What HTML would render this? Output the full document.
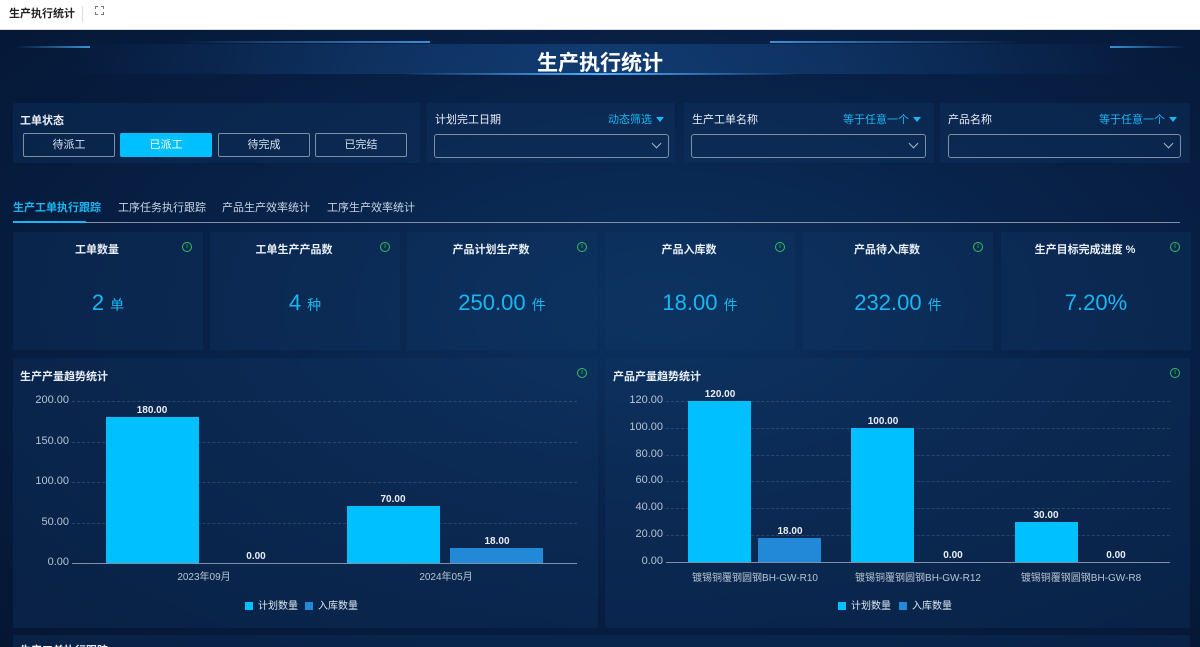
<!DOCTYPE html>
<html><head><meta charset="utf-8"><style>
*{margin:0;padding:0;box-sizing:border-box}
html,body{width:1200px;height:647px;overflow:hidden}
body{font-family:"Liberation Sans","Noto Sans CJK SC",sans-serif;background:#fff;position:relative}
.top{position:absolute;left:0;top:0;width:1200px;height:30px;background:#fff;border-bottom:1px solid #ddd}
.top span{position:absolute;left:9px;top:5px;font-size:11px;color:#222;font-weight:bold}
.main{position:absolute;left:0;top:30px;width:1200px;height:617px;background:radial-gradient(ellipse at 55% 45%,#0b3260 0%,#082249 45%,#051633 100%)}
.a{position:absolute}
.panel{position:absolute;background:rgba(18,55,100,0.35)}
.w{color:#e8eef6;font-size:11px;font-weight:bold}
.btn{position:absolute;top:133px;width:92px;height:24px;border:1px solid #7f8ea3;color:#d8e2ee;font-size:11px;text-align:center;line-height:22px;border-radius:2px}
.sel{position:absolute;top:134px;height:24px;border:1px solid #7f8ea3;border-radius:3px}
.sel i{position:absolute;right:8px;top:5px;width:7px;height:7px;border-right:1.5px solid #a8b8cc;border-bottom:1.5px solid #a8b8cc;transform:rotate(45deg)}
.blue{color:#19b6f2;font-size:11px}
.tri{display:inline-block;width:0;height:0;border-left:4px solid transparent;border-right:4px solid transparent;border-top:5px solid #19b6f2;margin-left:4px;vertical-align:1px}
.kt{position:absolute;top:241px;font-size:11px;font-weight:bold;color:#e8eef6;text-align:center;width:190px}
.kv{position:absolute;top:290px;font-size:22px;color:#19b6f2;text-align:center;width:190px}
.kv small{font-size:14px}
.info{position:absolute;width:10px;height:10px;border:1.2px solid #2fc35a;border-radius:50%;color:#2fc35a;font-size:7px;line-height:8px;text-align:center}
.yl{position:absolute;font-size:11px;color:#b8c4d2;text-align:right;width:50px}
.grid{position:absolute;height:0;border-top:1px dashed rgba(140,160,190,0.25)}
.bar{position:absolute;background:#00c0ff}
.bar2{position:absolute;background:#2189d8}
.vl{position:absolute;font-size:10px;color:#e8eef6;font-weight:bold;text-align:center;width:80px}
.xl{position:absolute;font-size:10px;color:#b8c4d2;text-align:center;width:200px}
.lg{position:absolute;font-size:10px;color:#dde6f0}
.lg b{display:inline-block;width:8px;height:8px;background:#00c0ff;margin-right:5px;vertical-align:-1px}
</style></head><body>
<div class="top"><span>生产执行统计</span><div class="a" style="left:82px;top:6px;width:1px;height:16px;background:#ddd"></div><div class="a" style="left:95px;top:6px;width:9px;height:9px;border:1px dashed #777"></div></div>
<div class="main"></div>
<div class="a" style="left:0;top:44px;width:1200px;height:30px;background:linear-gradient(90deg,transparent 5%,rgba(40,120,210,0.2) 30%,rgba(40,120,210,0.3) 50%,rgba(40,120,210,0.2) 70%,transparent 95%)"></div>
<div class="a" style="left:180px;top:41px;width:250px;height:2px;background:linear-gradient(90deg,transparent,#3a8fd8)"></div>
<div class="a" style="left:770px;top:41px;width:250px;height:2px;background:linear-gradient(90deg,#3a8fd8,transparent)"></div>
<div class="a" style="left:15px;top:46px;width:75px;height:2px;background:linear-gradient(90deg,transparent,#3a8fd8)"></div>
<div class="a" style="left:1110px;top:46px;width:75px;height:2px;background:linear-gradient(90deg,#3a8fd8,transparent)"></div>
<div class="a" style="left:400px;top:73px;width:400px;height:2px;background:linear-gradient(90deg,transparent,#4fb0ff,transparent)"></div>
<div class="a" style="left:0;top:47px;width:1200px;text-align:center;color:#fff;font-size:21px;font-weight:bold">生产执行统计</div>
<div class="panel" style="left:13px;top:103px;width:407px;height:60px"></div>
<div class="a w" style="left:20px;top:112px">工单状态</div>
<div class="btn" style="left:23px">待派工</div>
<div class="btn" style="left:120px;background:#00c0ff;border-color:#00c0ff;color:#fff">已派工</div>
<div class="btn" style="left:218px">待完成</div>
<div class="btn" style="left:315px">已完结</div>
<div class="panel" style="left:427px;top:103px;width:248px;height:60px"></div>
<div class="a w" style="left:435px;top:111px;font-weight:normal">计划完工日期</div>
<div class="a blue" style="left:608px;top:111px">动态筛选<span class="tri"></span></div>
<div class="sel" style="left:434px;width:235px"><i></i></div>
<div class="panel" style="left:684px;top:103px;width:250px;height:60px"></div>
<div class="a w" style="left:692px;top:111px;font-weight:normal">生产工单名称</div>
<div class="a blue" style="left:843px;top:111px">等于任意一个<span class="tri"></span></div>
<div class="sel" style="left:691px;width:235px"><i></i></div>
<div class="panel" style="left:940px;top:103px;width:250px;height:60px"></div>
<div class="a w" style="left:948px;top:111px;font-weight:normal">产品名称</div>
<div class="a blue" style="left:1099px;top:111px">等于任意一个<span class="tri"></span></div>
<div class="sel" style="left:948px;width:233px"><i></i></div>
<div class="a" style="left:13px;top:199px;font-size:11px;color:#19b6f2;font-weight:bold">生产工单执行跟踪</div>
<div class="a" style="left:118px;top:199px;font-size:11px;color:#c8d4e2">工序任务执行跟踪</div>
<div class="a" style="left:222px;top:199px;font-size:11px;color:#c8d4e2">产品生产效率统计</div>
<div class="a" style="left:327px;top:199px;font-size:11px;color:#c8d4e2">工序生产效率统计</div>
<div class="a" style="left:13px;top:222px;width:1167px;height:1px;background:#7f90a8"></div>
<div class="a" style="left:13px;top:221px;width:73px;height:2px;background:#19b6f2"></div>
<div class="panel" style="left:13px;top:232px;width:190px;height:118px"></div>
<div class="panel" style="left:210px;top:232px;width:190px;height:118px"></div>
<div class="panel" style="left:407px;top:232px;width:190px;height:118px"></div>
<div class="panel" style="left:605px;top:232px;width:190px;height:118px"></div>
<div class="panel" style="left:803px;top:232px;width:190px;height:118px"></div>
<div class="panel" style="left:1001px;top:232px;width:190px;height:118px"></div>
<div class="kt" style="left:2px">工单数量</div><div class="info" style="left:182px;top:242px">i</div>
<div class="kt" style="left:199px">工单生产产品数</div><div class="info" style="left:380px;top:242px">i</div>
<div class="kt" style="left:396px">产品计划生产数</div><div class="info" style="left:577px;top:242px">i</div>
<div class="kt" style="left:594px">产品入库数</div><div class="info" style="left:775px;top:242px">i</div>
<div class="kt" style="left:792px">产品待入库数</div><div class="info" style="left:973px;top:242px">i</div>
<div class="kt" style="left:990px">生产目标完成进度 %</div><div class="info" style="left:1170px;top:242px">i</div>
<div class="kv" style="left:13px">2 <small>单</small></div>
<div class="kv" style="left:210px">4 <small>种</small></div>
<div class="kv" style="left:407px">250.00 <small>件</small></div>
<div class="kv" style="left:605px">18.00 <small>件</small></div>
<div class="kv" style="left:803px">232.00 <small>件</small></div>
<div class="kv" style="left:1001px">7.20%</div>
<div class="panel" style="left:13px;top:358px;width:585px;height:270px"></div>
<div class="a w" style="left:20px;top:368px">生产产量趋势统计</div><div class="info" style="left:577px;top:368px">i</div>
<div class="yl" style="left:19px;top:394px">200.00</div><div class="grid" style="left:72px;top:401px;width:505px"></div>
<div class="yl" style="left:19px;top:435px">150.00</div><div class="grid" style="left:72px;top:442px;width:505px"></div>
<div class="yl" style="left:19px;top:475px">100.00</div><div class="grid" style="left:72px;top:482px;width:505px"></div>
<div class="yl" style="left:19px;top:516px">50.00</div><div class="grid" style="left:72px;top:523px;width:505px"></div>
<div class="yl" style="left:19px;top:556px">0.00</div>
<div class="a" style="left:72px;top:563px;width:505px;height:1px;background:#8090a8"></div>
<div class="bar" style="left:106px;top:417px;width:93px;height:146px"></div><div class="vl" style="left:112px;top:405px">180.00</div>
<div class="vl" style="left:216px;top:551px">0.00</div>
<div class="bar" style="left:347px;top:506px;width:93px;height:57px"></div><div class="vl" style="left:353px;top:494px">70.00</div>
<div class="bar2" style="left:450px;top:548px;width:93px;height:15px"></div><div class="vl" style="left:457px;top:536px">18.00</div>
<div class="xl" style="left:104px;top:568px">2023年09月</div>
<div class="xl" style="left:346px;top:568px">2024年05月</div>
<div class="lg" style="left:245px;top:597px"><b></b>计划数量</div>
<div class="lg" style="left:305px;top:597px"><b style="background:#2189d8"></b>入库数量</div>
<div class="panel" style="left:605px;top:358px;width:585px;height:270px"></div>
<div class="a w" style="left:613px;top:368px">产品产量趋势统计</div><div class="info" style="left:1170px;top:368px">i</div>
<div class="yl" style="left:613px;top:394px">120.00</div><div class="grid" style="left:666px;top:401px;width:504px"></div>
<div class="yl" style="left:613px;top:421px">100.00</div><div class="grid" style="left:666px;top:428px;width:504px"></div>
<div class="yl" style="left:613px;top:448px">80.00</div><div class="grid" style="left:666px;top:455px;width:504px"></div>
<div class="yl" style="left:613px;top:474px">60.00</div><div class="grid" style="left:666px;top:481px;width:504px"></div>
<div class="yl" style="left:613px;top:501px">40.00</div><div class="grid" style="left:666px;top:508px;width:504px"></div>
<div class="yl" style="left:613px;top:528px">20.00</div><div class="grid" style="left:666px;top:535px;width:504px"></div>
<div class="yl" style="left:613px;top:555px">0.00</div>
<div class="a" style="left:666px;top:562px;width:504px;height:1px;background:#8090a8"></div>
<div class="bar" style="left:688px;top:401px;width:63px;height:161px"></div><div class="vl" style="left:680px;top:389px">120.00</div>
<div class="bar2" style="left:758px;top:538px;width:63px;height:24px"></div><div class="vl" style="left:750px;top:526px">18.00</div>
<div class="bar" style="left:851px;top:428px;width:63px;height:134px"></div><div class="vl" style="left:843px;top:416px">100.00</div>
<div class="vl" style="left:913px;top:550px">0.00</div>
<div class="bar" style="left:1015px;top:522px;width:63px;height:40px"></div><div class="vl" style="left:1006px;top:510px">30.00</div>
<div class="vl" style="left:1076px;top:550px">0.00</div>
<div class="xl" style="left:655px;top:569px">镀锡铜覆钢圆钢BH-GW-R10</div>
<div class="xl" style="left:818px;top:569px">镀锡铜覆钢圆钢BH-GW-R12</div>
<div class="xl" style="left:981px;top:569px">镀锡铜覆钢圆钢BH-GW-R8</div>
<div class="lg" style="left:838px;top:597px"><b></b>计划数量</div>
<div class="lg" style="left:899px;top:597px"><b style="background:#2189d8"></b>入库数量</div>
<div class="panel" style="left:13px;top:635px;width:1177px;height:12px"></div>
<div class="a w" style="left:20px;top:642px">生产工单执行跟踪</div>
</body></html>
